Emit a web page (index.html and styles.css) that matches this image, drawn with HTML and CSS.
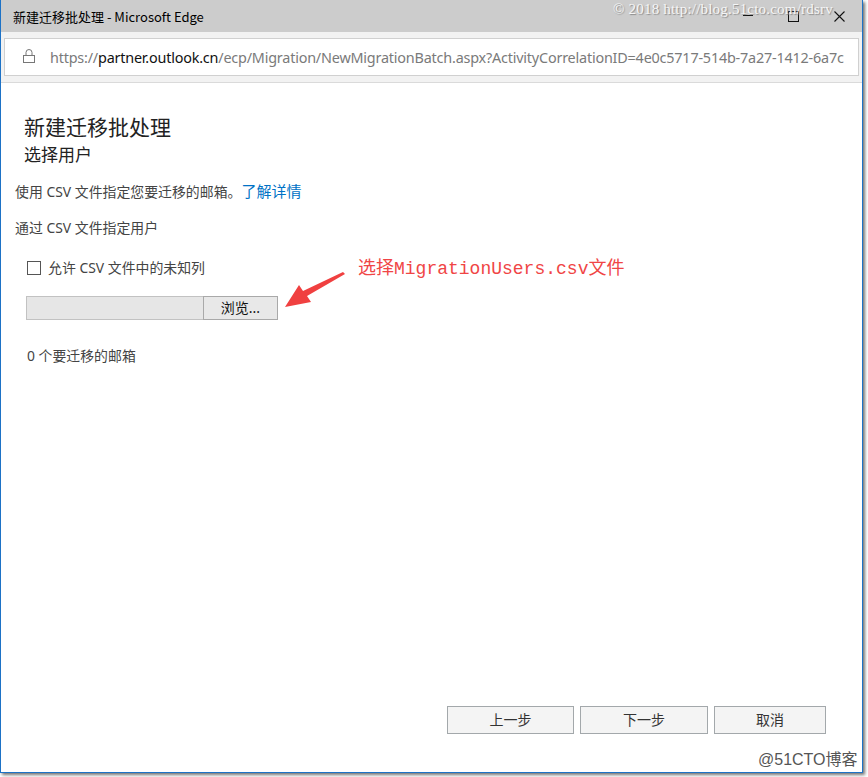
FILE: index.html
```html
<!DOCTYPE html>
<html lang="zh-CN">
<head>
<meta charset="utf-8">
<title>新建迁移批处理</title>
<link rel="stylesheet" href="styles.css">
</head>
<body>
<div class="screen">
  <div class="window">
    <div class="titlebar">
      <span class="title">新建迁移批处理 - Microsoft Edge</span>
      <div class="controls">
        <span class="ctl min"></span>
        <span class="ctl max"></span>
        <svg class="ctl close" width="11" height="11" viewBox="0 0 11 11"><path d="M0.5 0.5 L10.5 10.5 M10.5 0.5 L0.5 10.5" stroke="#111" stroke-width="1.1"/></svg>
      </div>
      <span class="wm-top">© 2018 http://blog.51cto.com/rdsrv</span>
    </div>
    <div class="addressbar">
      <div class="urlbox">
        <svg class="lock" width="12" height="15" viewBox="0 0 12 15"><path d="M3 7 V4.5 A3 3 0 0 1 9 4.5 V7" fill="none" stroke="#777" stroke-width="1"/><rect x="0.5" y="7.5" width="11" height="7" fill="none" stroke="#777" stroke-width="1"/></svg>
        <span class="url">https://<span class="host">partner.outlook.cn</span>/ecp/Migration/NewMigrationBatch.aspx?ActivityCorrelationID=4e0c5717-514b-7a27-1412-6a7c</span>
      </div>
    </div>
    <div class="content">
      <h1 class="h1">新建迁移批处理</h1>
      <h2 class="h2">选择用户</h2>
      <p class="line l1">使用 CSV 文件指定您要迁移的邮箱。<a class="link">了解详情</a></p>
      <p class="line l2">通过 CSV 文件指定用户</p>
      <div class="check-row"><span class="checkbox"></span><span>允许 CSV 文件中的未知列</span></div>
      <div class="file-row"><span class="file-field"></span><span class="browse">浏览...</span></div>
      <p class="line count">0 个要迁移的邮箱</p>
      <div class="buttons">
        <span class="btn b1">上一步</span>
        <span class="btn b2">下一步</span>
        <span class="btn b3">取消</span>
      </div>
    </div>
    <div class="note">选择MigrationUsers.csv文件</div>
    <svg class="arrow" width="70" height="45" viewBox="0 0 70 45"><polygon points="58,0 60,2 22,24 26,30 0,35 14,13 18,19" fill="#f04040"/></svg>
    <span class="wm-bottom">@51CTO博客</span>
  </div>
</div>
</body>
</html>
```
FILE: styles.css
```css
html, body { margin: 0; padding: 0; background: #ffffff; }
.screen { width: 868px; height: 777px; position: relative; overflow: hidden; background: #fff; }
.window {
  position: relative;
  width: 861px; height: 772px;
  border-left: 1px solid #1d72c6;
  border-right: 1px solid #1d72c6;
  border-bottom: 1px solid #1d72c6;
  box-shadow: 2px 2px 3px rgba(0,0,0,0.55);
  background: #fff;
  display: flex; flex-direction: column;
  font-family: "Noto Sans", "Noto Sans CJK SC", sans-serif;
}
.titlebar {
  height: 32px; background: #cccccc; display: flex; align-items: center;
  padding-left: 12px; position: relative; flex: none;
}
.title { font-size: 13px; color: #000; font-family: "Noto Sans CJK SC", sans-serif; }
.controls { margin-left: auto; display: flex; align-items: center; height: 32px; }
.ctl { display: block; }
.min { width: 10px; height: 1px; background: #111; margin-right: 35px; margin-top: -2px; }
.max { width: 9px; height: 9px; border: 1px solid #111; margin-right: 35px; }
.close { margin-right: 17px; }
.wm-top {
  position: absolute; left: 612px; top: 1px;
  font-family: "Liberation Serif", "DejaVu Serif", serif; font-size: 15px;
  color: #f6f6f6; text-shadow: 1px 1px 1px #8a8a8a; letter-spacing: 0.2px;
}
.addressbar {
  height: 51px; background: #f2f2f2; border-bottom: 1px solid #dadada; flex: none;
  padding: 6px 3px 0 3px; box-sizing: border-box;
}
.urlbox {
  height: 38px; background: #fff; border: 1px solid #d0d0d0; box-sizing: border-box;
  display: flex; align-items: center; padding-left: 18px; overflow: hidden; white-space: nowrap;
}
.lock { flex: none; margin-right: 15px; margin-top: -3px; }
.url { font-size: 14.4px; color: #7a7a7a; font-family: "Noto Sans", sans-serif; letter-spacing: -0.2px; }
.host { color: #111; }
.content { flex: 1; display: flex; flex-direction: column; color: #333; }
.h1 { margin: 29px 0 0 23px; font-size: 21px; line-height: 28px; font-weight: normal; color: #222; font-family: "Noto Sans CJK SC", sans-serif; }
.h2 { margin: 2px 0 0 23px; font-size: 17px; line-height: 24px; font-weight: normal; color: #222; font-family: "Noto Sans CJK SC", sans-serif; }
.line { margin: 0; font-size: 13.9px; line-height: 18px; color: #444; }
.l1 { margin: 16px 0 0 14px; }
.link { color: #0072c6; font-size: 15px; }
.l2 { margin: 18px 0 0 14px; }
.check-row { margin: 22px 0 0 26px; display: flex; align-items: center; font-size: 13.9px; line-height: 18px; color: #444; }
.checkbox { width: 12px; height: 12px; border: 1px solid #555; margin-right: 7px; background: #fff; }
.file-row { margin: 19px 0 0 25px; display: flex; height: 24px; }
.file-field { width: 176px; height: 22px; background: #e6e6e6; border: 1px solid #c2c2c2; border-right: none; }
.browse {
  width: 73px; height: 22px; background: #e8e8e8; border: 1px solid #a9a9a9;
  font-size: 14px; line-height: 22px; text-align: center; color: #111;
}
.count { margin: 27px 0 0 26px; }
.buttons { margin-top: auto; margin-bottom: 38px; display: flex; padding-left: 446px; gap: 6px; }
.btn {
  height: 26px; background: #f4f4f4; border: 1px solid #a3a8ab; text-align: center;
  font-size: 14px; line-height: 26px; color: #333;
}
.b1 { width: 125px; }
.b2 { width: 126px; }
.b3 { width: 110px; }
.note {
  position: absolute; left: 357px; top: 257px; font-size: 18px; line-height: 24px;
  color: #f04545; font-family: "Liberation Mono", "Noto Sans CJK SC", monospace;
}
.arrow { position: absolute; left: 284px; top: 272px; }
.wm-bottom {
  position: absolute; left: 757px; top: 746px; font-size: 16px; color: #555;
  font-family: "Liberation Sans", "Noto Sans CJK SC", sans-serif;
  text-shadow: 0 0 1px #fff;
}
```
